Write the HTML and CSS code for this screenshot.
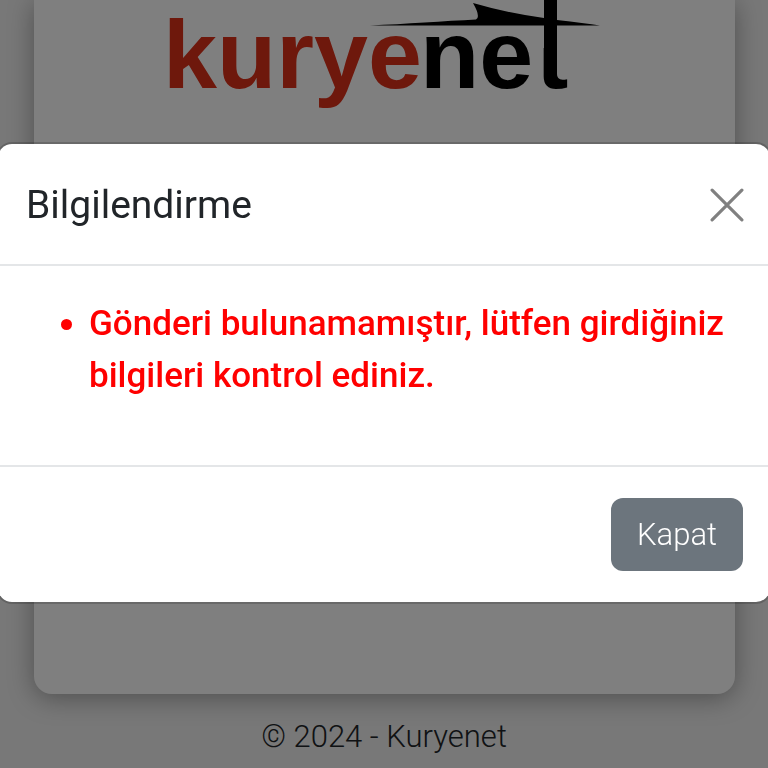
FILE: index.html
```html
<!DOCTYPE html>
<html lang="tr">
<head>
<meta charset="utf-8">
<meta name="viewport" content="width=device-width, initial-scale=1">
<title>Kuryenet</title>
<link rel="stylesheet" href="styles.css">
</head>
<body>
<div class="page">
  <main class="card">
    <svg class="logo" viewBox="-10 0 460 116" role="img" aria-label="kuryenet">
      <defs><clipPath id="foot"><rect x="360" y="48" width="70" height="60"/></clipPath></defs>
      <text class="logo-text" y="88"><tspan class="logo-red" x="-2">kurye</tspan><tspan x="255">ne</tspan></text>
      <text class="logo-text" x="371" y="88" clip-path="url(#foot)">t</text>
      <path d="M379 0H392V76H379Z"/>
      <path d="M205 25.500C240 24 280 21 311 19.500Q316 17 308 3Q342 13 379 18L392 20Q420 23 435 25.500Z"/>
    </svg>
  </main>
  <footer class="page-footer">© 2024 - Kuryenet</footer>
</div>
<div class="backdrop">
  <section class="modal" role="dialog" aria-modal="true" aria-labelledby="modal-title">
    <header class="modal-header">
      <h1 id="modal-title">Bilgilendirme</h1>
      <button class="close" type="button" aria-label="Kapat">
        <svg viewBox="0 0 32 32" aria-hidden="true"><path d="M2 2L30 30M30 2L2 30"/></svg>
      </button>
    </header>
    <div class="modal-body">
      <ul class="messages">
        <li>Gönderi bulunamamıştır, lütfen girdiğiniz bilgileri kontrol ediniz.</li>
      </ul>
    </div>
    <footer class="modal-footer">
      <button class="button" type="button">Kapat</button>
    </footer>
  </section>
</div>
</body>
</html>
```
FILE: styles.css
```css
* { box-sizing: border-box; }

body {
  margin: 0;
  background: #f0f0f0;
  color: #212529;
  font-family: Roboto, "Liberation Sans", sans-serif;
  font-size: 31px;
  font-weight: 300;
}

.page {
  display: flex;
  flex-direction: column;
  height: 100vh;
  overflow: hidden;
}

.card {
  flex: 1;
  margin: 0 33px 0 34px;
  text-align: center;
  background: #fff;
  border-radius: 0 0 18px 18px;
  box-shadow: 0 4px 26px rgba(0, 0, 0, 0.35);
}

.logo { width: 460px; max-width: 100%; }

.logo-text {
  font-family: "Liberation Sans", sans-serif;
  font-size: 97px;
  font-weight: 700;
}

.logo-red { fill: #dd3019; }

.page-footer {
  padding: 24px 0 12px;
  line-height: 38px;
  text-align: center;
}

.backdrop {
  position: fixed;
  inset: 0;
  display: flex;
  align-items: center;
  padding-bottom: 22px;
  background: rgba(0, 0, 0, 0.5);
  overflow: hidden;
}

.modal {
  flex: 1;
  margin: 0 -4px;
  background: #fff;
  background-clip: padding-box;
  border: 2px solid rgba(0, 0, 0, 0.175);
  border-radius: 16px;
}

.modal-header {
  display: flex;
  align-items: center;
  justify-content: space-between;
  padding: 32px 26px 30px 28px;
  border-bottom: 2px solid #e4e6e8;
}

.modal-header h1 {
  margin: 0;
  font-size: 39px;
  font-weight: 400;
  line-height: 58px;
}

.close {
  width: 34px;
  height: 34px;
  padding: 0;
  border: 0;
  background: none;
}

.close svg {
  display: block;
  fill: none;
  stroke: #808080;
  stroke-width: 3;
  stroke-linecap: round;
}

.modal-body { padding: 32px 30px 32px 33px; }

.messages {
  margin: 0 0 31px;
  padding-left: 58px;
  color: #f00;
  font-size: 35px;
  font-weight: 500;
  line-height: 52px;
}

.modal-footer {
  display: flex;
  justify-content: flex-end;
  padding: 31px 27px;
  border-top: 2px solid #e4e6e8;
}

.button {
  padding: 12px 26px;
  border: 0;
  border-radius: 12px;
  background: #6c757d;
  color: #fff;
  font: inherit;
  line-height: 49px;
}
```
